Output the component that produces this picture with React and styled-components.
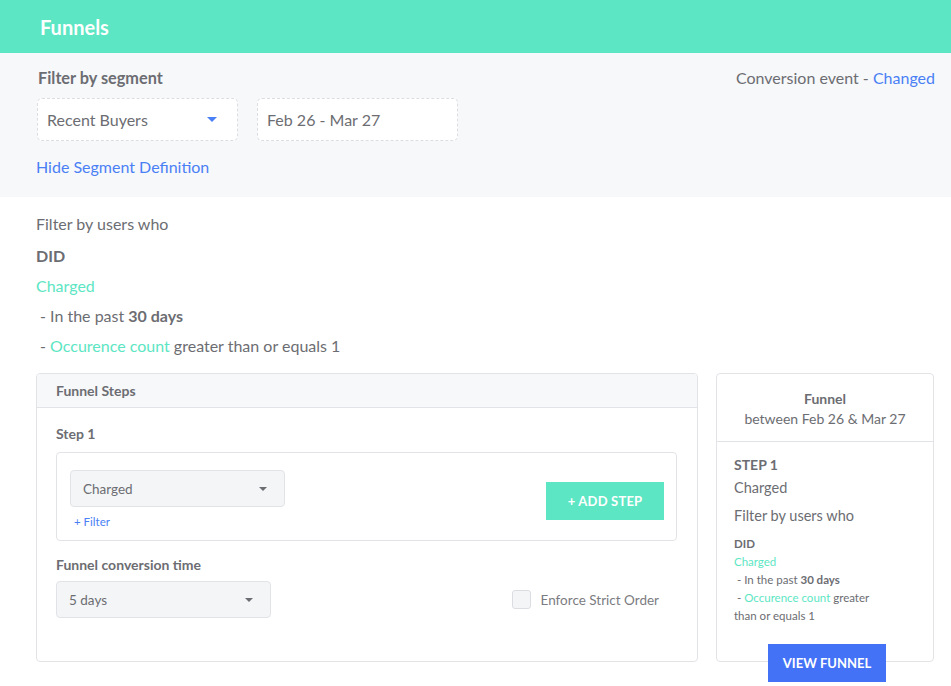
import React from "react";
import styled, { createGlobalStyle } from "styled-components";

const Global = createGlobalStyle`
  html, body { margin: 0; padding: 0; background: #ffffff; }
  body { font-family: Lato, "Open Sans", sans-serif; color: #6c6d72; }
  * { box-sizing: border-box; }
`;

const teal = "#5ce6c3";
const blue = "#4a80f5";

const Page = styled.div`
  width: 951px;
  min-height: 686px;
  overflow: hidden;
`;

const Header = styled.header`
  height: 53px;
  background: ${teal};
  display: flex;
  align-items: center;
  padding-left: 40px;
`;

const Title = styled.h1`
  margin: 0;
  font-size: 20px;
  font-weight: 700;
  color: #ffffff;
`;

const SegmentPanel = styled.section`
  background: #f7f8fa;
  height: 144px;
  padding: 15px 16px 0 36px;
  display: flex;
  justify-content: space-between;
  align-items: flex-start;
`;

const SegmentLeft = styled.div`
  display: flex;
  flex-direction: column;
`;

const Label = styled.div`
  font-size: 16.3px;
  font-weight: 700;
  color: #6c6d72;
  margin-left: 2px;
  height: 20px;
  line-height: 20px;
`;

const Pickers = styled.div`
  display: flex;
  gap: 19px;
  margin-top: 10px;
  margin-left: 1px;
`;

const DashedBox = styled.div`
  width: 201px;
  height: 43px;
  border: 1px dashed #dcdde2;
  border-radius: 5px;
  background: #fff;
  display: flex;
  align-items: center;
  justify-content: space-between;
  padding: 0 20px 0 9px;
  font-size: 16px;
  color: #6c6d72;
`;

const Caret = styled.span`
  width: 0;
  height: 0;
  border-left: ${(p) => p.$size || 4}px solid transparent;
  border-right: ${(p) => p.$size || 4}px solid transparent;
  border-top: ${(p) => p.$size || 4}px solid ${(p) => p.$color || "#6c6d72"};
`;

const Link = styled.a`
  color: ${blue};
  font-size: 16px;
  text-decoration: none;
  margin-top: 16px;
  line-height: 20px;
`;

const ConversionEvent = styled.div`
  font-size: 16px;
  line-height: 20px;
  color: #6c6d72;
`;

const Accent = styled.span`
  color: ${(p) => p.$color};
  font-weight: ${(p) => (p.$bold ? 700 : 400)};
`;

const Definition = styled.section`
  padding: 17px 0 0 36px;
  display: flex;
  flex-direction: column;
`;

const DefLine = styled.div`
  font-size: 16px;
  line-height: 20px;
  height: ${(p) => p.$h || 30}px;
  color: ${(p) => p.$color || "#6c6d72"};
  font-weight: ${(p) => (p.$bold ? 700 : 400)};
  padding-left: ${(p) => (p.$indent ? 4 : 0)}px;
`;

const Content = styled.section`
  display: flex;
  gap: 18px;
  padding: 7px 17px 0 36px;
  align-items: flex-start;
`;

const StepsCard = styled.div`
  width: 662px;
  height: 289px;
  border: 1px solid #e2e3e7;
  border-radius: 4px;
  display: flex;
  flex-direction: column;
  overflow: hidden;
`;

const CardHead = styled.div`
  height: 34px;
  background: #f7f8fa;
  border-bottom: 1px solid #e2e3e7;
  display: flex;
  align-items: center;
  padding-left: 19px;
  font-size: 14px;
  font-weight: 700;
  color: #6c6d72;
`;

const CardBody = styled.div`
  padding: 17px 20px 0 19px;
  display: flex;
  flex-direction: column;
`;

const SubLabel = styled.div`
  font-size: 14px;
  font-weight: 700;
  line-height: 18px;
  color: #6c6d72;
`;

const StepBox = styled.div`
  margin-top: 9px;
  height: 89px;
  border: 1px solid #e2e3e7;
  border-radius: 4px;
  display: flex;
  align-items: flex-start;
  justify-content: space-between;
  padding: 17px 12px 0 13px;
`;

const StepLeft = styled.div`
  display: flex;
  flex-direction: column;
`;

const Select = styled.div`
  width: 215px;
  height: 37px;
  background: #f4f5f7;
  border: 1px solid #e2e3e7;
  border-radius: 4px;
  display: flex;
  align-items: center;
  justify-content: space-between;
  padding: 0 17px 0 12px;
  font-size: 13.5px;
  color: #6c6d72;
`;

const SmallLink = styled.a`
  color: ${blue};
  font-size: 11.5px;
  margin: 8px 0 0 4px;
  text-decoration: none;
`;

const AddStep = styled.button`
  margin-top: 12px;
  width: 118px;
  height: 38px;
  border: none;
  background: ${teal};
  color: #fff;
  font-family: inherit;
  font-size: 13px;
  font-weight: 700;
  letter-spacing: 0.2px;
`;

const ConversionLabel = styled(SubLabel)`
  margin-top: 15px;
`;

const TimeRow = styled.div`
  margin-top: 7px;
  display: flex;
  align-items: center;
  justify-content: space-between;
  padding-right: 18px;
`;

const CheckRow = styled.label`
  display: flex;
  align-items: center;
  gap: 10px;
  font-size: 13.5px;
  color: #7b7c81;
`;

const Checkbox = styled.span`
  width: 19px;
  height: 19px;
  border: 1px solid #dcdde2;
  border-radius: 3px;
  background: #f4f5f7;
`;

const SummaryCard = styled.div`
  width: 218px;
  height: 289px;
  border: 1px solid #e2e3e7;
  border-radius: 4px;
  display: flex;
  flex-direction: column;
`;

const SummaryHead = styled.div`
  height: 68px;
  border-bottom: 1px solid #e2e3e7;
  display: flex;
  flex-direction: column;
  align-items: center;
  padding-top: 15px;
  font-size: 14px;
  line-height: 20px;
  color: #6c6d72;
`;

const Bold = styled.span`
  font-weight: 700;
`;

const SummaryBody = styled.div`
  padding: 14px 40px 0 17px;
  display: flex;
  flex-direction: column;
  flex: 1;
`;

const SumLine = styled.div`
  font-size: ${(p) => p.$size || 11.5}px;
  line-height: ${(p) => p.$lh || 18}px;
  font-weight: ${(p) => (p.$bold ? 700 : 400)};
  color: ${(p) => p.$color || "#6c6d72"};
  margin-top: ${(p) => p.$mt || 0}px;
  padding-left: ${(p) => (p.$indent ? 3 : 0)}px;
`;

const ViewFunnel = styled.button`
  align-self: flex-start;
  margin-top: auto;
  margin-bottom: -21px;
  margin-left: 34px;
  width: 118px;
  height: 38px;
  border: none;
  background: #4372f7;
  color: #fff;
  font-family: inherit;
  font-size: 13px;
  font-weight: 700;
`;

export default function App() {
  return (
    <Page>
      <Global />
      <Header>
        <Title>Funnels</Title>
      </Header>
      <SegmentPanel>
        <SegmentLeft>
          <Label>Filter by segment</Label>
          <Pickers>
            <DashedBox>
              Recent Buyers
              <Caret $color="#4a80f5" $size={5} />
            </DashedBox>
            <DashedBox>Feb 26 - Mar 27</DashedBox>
          </Pickers>
          <Link href="#">Hide Segment Definition</Link>
        </SegmentLeft>
        <ConversionEvent>
          Conversion event - <Accent $color={blue}>Changed</Accent>
        </ConversionEvent>
      </SegmentPanel>
      <Definition>
        <DefLine $h={32}>Filter by users who</DefLine>
        <DefLine $bold>DID</DefLine>
        <DefLine $color={teal}>Charged</DefLine>
        <DefLine $indent>
          - In the past <Accent $bold>30 days</Accent>
        </DefLine>
        <DefLine $indent>
          - <Accent $color={teal}>Occurence count</Accent> greater than or equals 1
        </DefLine>
      </Definition>
      <Content>
        <StepsCard>
          <CardHead>Funnel Steps</CardHead>
          <CardBody>
            <SubLabel>Step 1</SubLabel>
            <StepBox>
              <StepLeft>
                <Select>
                  Charged
                  <Caret />
                </Select>
                <SmallLink href="#">+ Filter</SmallLink>
              </StepLeft>
              <AddStep>+ ADD STEP</AddStep>
            </StepBox>
            <ConversionLabel>Funnel conversion time</ConversionLabel>
            <TimeRow>
              <Select>
                5 days
                <Caret />
              </Select>
              <CheckRow>
                <Checkbox />
                Enforce Strict Order
              </CheckRow>
            </TimeRow>
          </CardBody>
        </StepsCard>
        <SummaryCard>
          <SummaryHead>
            <Bold>Funnel</Bold>
            <span>between Feb 26 &amp; Mar 27</span>
          </SummaryHead>
          <SummaryBody>
            <SumLine $size={14} $bold $lh={18}>STEP 1</SumLine>
            <SumLine $size={14.5} $lh={20} $mt={4}>Charged</SumLine>
            <SumLine $size={14.5} $lh={20} $mt={8}>Filter by users who</SumLine>
            <SumLine $bold $mt={9}>DID</SumLine>
            <SumLine $color={teal}>Charged</SumLine>
            <SumLine $indent>
              - In the past <Accent $bold>30 days</Accent>
            </SumLine>
            <SumLine $indent>
              - <Accent $color={teal}>Occurence count</Accent> greater
            </SumLine>
            <SumLine>than or equals 1</SumLine>
            <ViewFunnel>VIEW FUNNEL</ViewFunnel>
          </SummaryBody>
        </SummaryCard>
      </Content>
    </Page>
  );
}
